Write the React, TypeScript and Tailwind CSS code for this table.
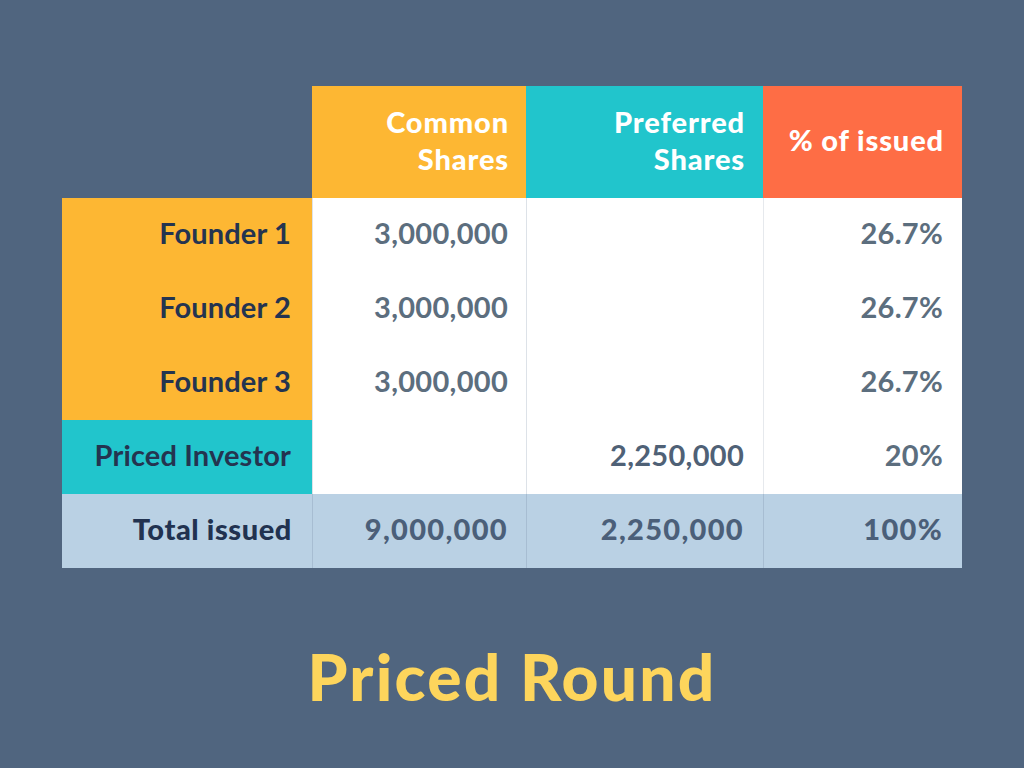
import React from "react";

const font = { fontFamily: "Lato, 'Noto Sans', sans-serif" };

type Row = { label: string; bg: string; common: string; pref: string; pct: string };

const rows: Row[] = [
  { label: "Founder 1", bg: "bg-[#fdb733]", common: "3,000,000", pref: "", pct: "26.7%" },
  { label: "Founder 2", bg: "bg-[#fdb733]", common: "3,000,000", pref: "", pct: "26.7%" },
  { label: "Founder 3", bg: "bg-[#fdb733]", common: "3,000,000", pref: "", pct: "26.7%" },
  { label: "Priced Investor", bg: "bg-[#21c5cc]", common: "", pref: "2,250,000", pct: "20%" },
];

export default function App() {
  return (
    <div className="w-[1024px] h-[768px] bg-[#50657f] flex flex-col items-center pt-[86px]" style={font}>
      <div className="grid grid-cols-[250px_214px_237px_199px] text-[29px] font-bold">
        <div className="h-[112px]" />
        <div className="h-[112px] bg-[#fdb733] text-white font-black tracking-[0.03em] flex flex-col justify-center items-end pr-[17px] pb-[4px] leading-[37px] text-right">
          <span>Common</span>
          <span>Shares</span>
        </div>
        <div className="h-[112px] bg-[#21c5cc] text-white font-black tracking-[0.03em] flex flex-col justify-center items-end pr-[18px] pb-[4px] leading-[37px] text-right">
          <span>Preferred</span>
          <span>Shares</span>
        </div>
        <div className="h-[112px] bg-[#fe6d45] text-white font-black tracking-[0.03em] flex items-center justify-end pr-[18px] pb-[4px]">
          % of issued
        </div>
        {rows.map((r) => (
          <React.Fragment key={r.label}>
            <div className={`h-[74px] ${r.bg} text-[#243450] flex items-center justify-end pr-[21px] pb-[4px] tracking-[0.005em]`}>{r.label}</div>
            <div className="h-[74px] bg-white border-l border-[#dde2e8] text-[#5c6e7e] flex items-center justify-end pr-[18px] pb-[4px] tracking-[0.01em]">{r.common}</div>
            <div className="h-[74px] bg-white border-l border-[#dde2e8] text-[#4f6176] flex items-center justify-end pr-[19px] pb-[4px] tracking-[0.01em]">{r.pref}</div>
            <div className="h-[74px] bg-white border-l border-[#e6e9ed] text-[#5c6e7e] flex items-center justify-end pr-[19px] pb-[4px] tracking-[0.01em]">{r.pct}</div>
          </React.Fragment>
        ))}
        <div className="h-[74px] bg-[#bad1e4] text-[#213250] flex items-center justify-end pr-[20px] pb-[4px] font-black tracking-[0.02em]">Total issued</div>
        <div className="h-[74px] bg-[#bad1e4] border-l border-[#a7bdd2] text-[#4b5f79] flex items-center justify-end pr-[18px] pb-[4px] font-black tracking-[0.045em]">9,000,000</div>
        <div className="h-[74px] bg-[#bad1e4] border-l border-[#a7bdd2] text-[#4b5f79] flex items-center justify-end pr-[19px] pb-[4px] font-black tracking-[0.045em]">2,250,000</div>
        <div className="h-[74px] bg-[#bad1e4] border-l border-[#a7bdd2] text-[#4b5f79] flex items-center justify-end pr-[19px] pb-[4px] font-black tracking-[0.045em]">100%</div>
      </div>
      <div className="mt-[69px] text-[64px] leading-[80px] font-black tracking-[0.035em] text-[#fdd55c]">Priced Round</div>
    </div>
  );
}
